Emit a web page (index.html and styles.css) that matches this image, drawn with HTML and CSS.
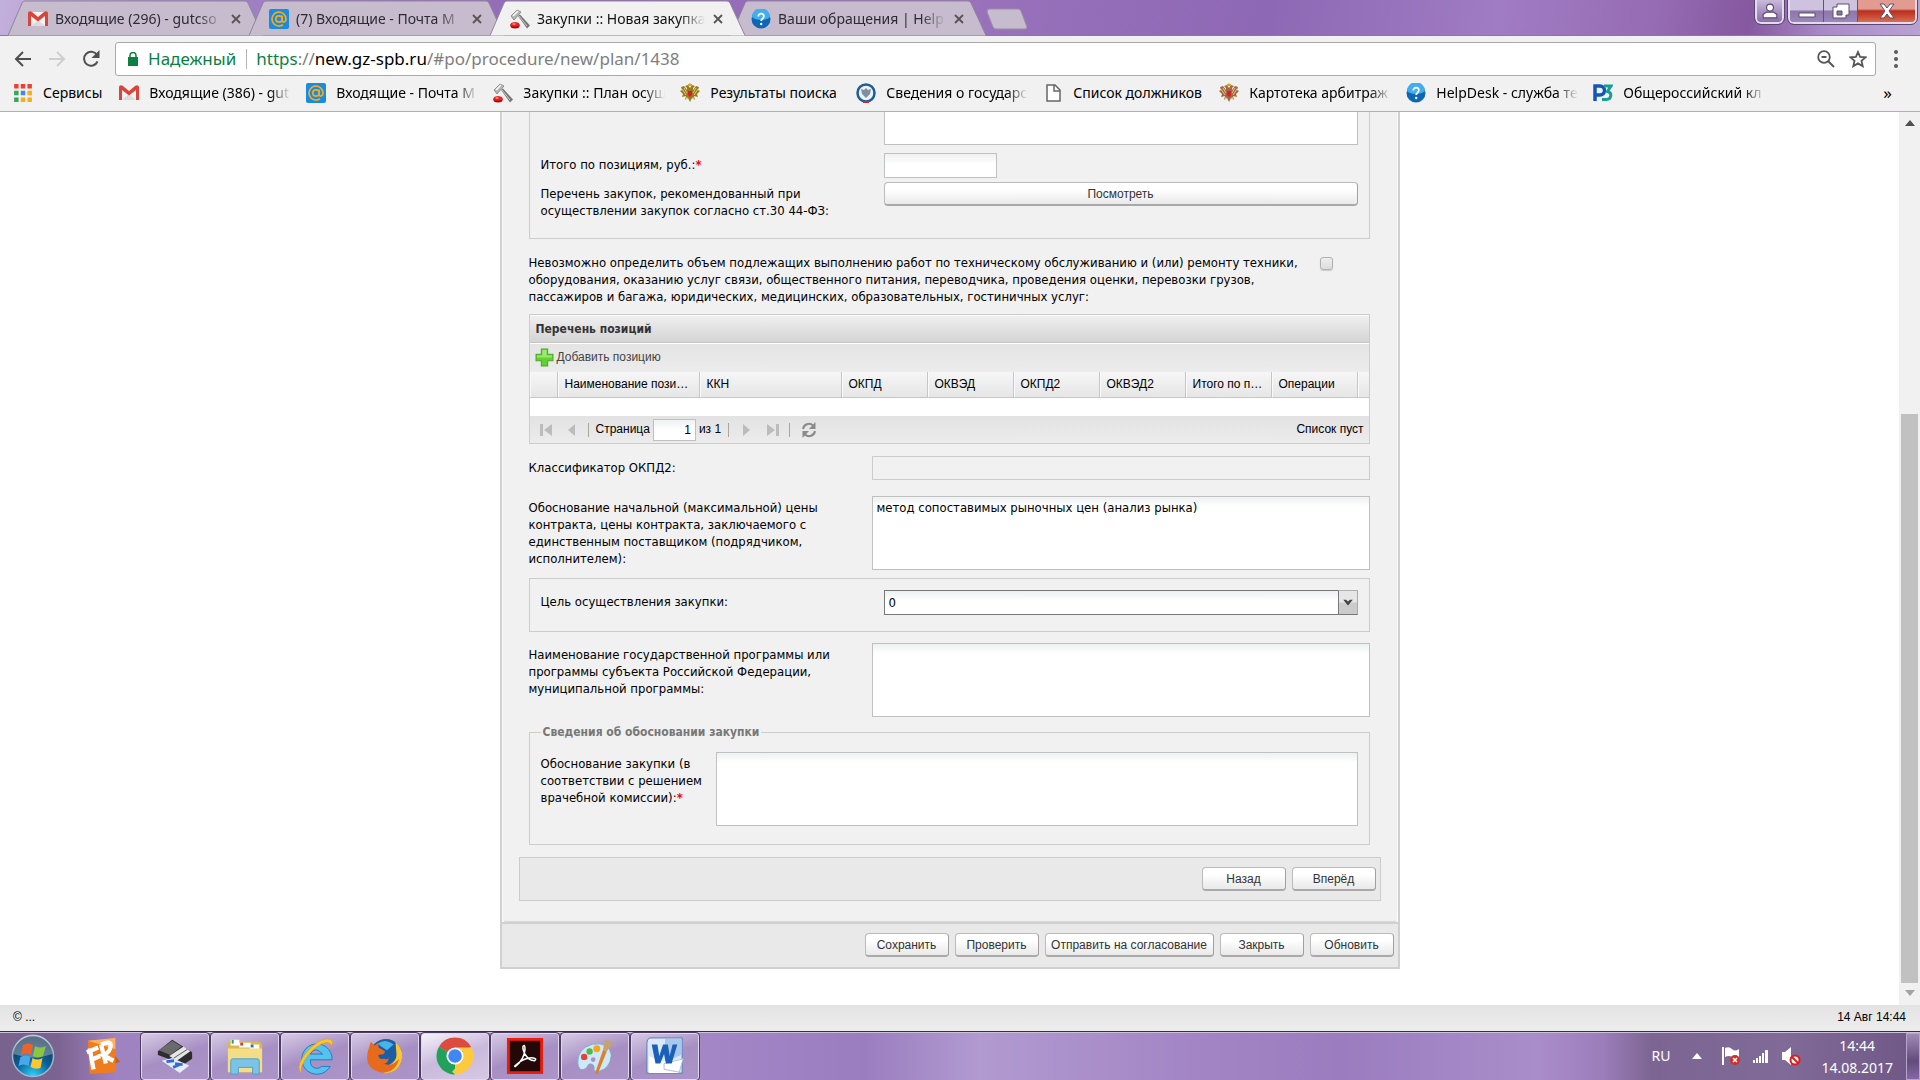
FILE: index.html
```html
<!DOCTYPE html>
<html lang="ru">
<head>
    <meta charset="UTF-8">
    <meta name="viewport" content="width=device-width, initial-scale=1.0">
    <title>Закупки :: Новая закупка</title>
    <link rel="stylesheet" href="styles.css">
</head>
<body>
    <!-- shared icons -->
    <svg class="sprite" aria-hidden="true">
        <symbol id="i-gmail" viewBox="0 0 20 20">
            <path d="M1 3h18v14H1z" fill="#f2f2f2"/>
            <path d="M3 17 10 11l7 6z" fill="#dcdcdc"/>
            <path d="M0 4.500C0 2 2.500 1.500 4 3l6 5 6-5c1.500-1.500 4-1 4 1.500V17h-3V7l-7 5.500L3 7v10H0z" fill="#d9453a"/>
        </symbol>
        <symbol id="i-mail" viewBox="0 0 20 20">
            <rect width="20" height="20" rx="2" fill="#168de2"/>
            <g fill="none" stroke="#f7a81b" stroke-width="1.700">
                <circle cx="10" cy="10" r="3.200"/>
                <path d="M13.200 6.500v5c0 2.500 3.800 2 3.800-1.500a7 7 0 1 0-3 5.800"/>
            </g>
        </symbol>
        <symbol id="i-gavel" viewBox="0 0 20 20">
            <path d="M8 7l2-1.500 10 11-3 3z" fill="#777"/>
            <path d="M9 7l8 10" stroke="#ccc" stroke-width="1"/>
            <path d="M1 7 7 1l4 2-7 8z" fill="#b5b5b5" stroke="#808080" stroke-width=".8"/>
            <path d="M3 7l5-5" stroke="#fff" stroke-width="1.500"/>
            <ellipse cx="5" cy="16.500" rx="4.700" ry="3" fill="#b30000"/>
            <ellipse cx="5" cy="15.500" rx="4.300" ry="2.200" fill="#ee2020"/>
            <ellipse cx="4" cy="15" rx="1.800" ry=".8" fill="#ff9a9a"/>
        </symbol>
        <symbol id="i-help" viewBox="0 0 20 20">
            <circle cx="10" cy="10" r="9.500" fill="#0e67b4"/>
            <path d="M1 8a9 9 0 0 1 18 0c-4 4-14 4-18 0z" fill="#41aef0"/>
            <path d="M7.300 7.500c0-4 6-3.500 5.500 0-.2 2-2.600 2.200-2.600 4.500" fill="none" stroke="#fff" stroke-width="1.800"/>
            <circle cx="10.200" cy="15" r="1.200" fill="#fff"/>
        </symbol>
        <symbol id="i-eagle" viewBox="0 0 20 20">
            <path d="M10 5 8 2 5 3l2 2v2L4 3 1 4l1 3-2 1 3 3-1 3 4-1-1 4 3-2 2 4 2-4 3 2-1-4 4 1-1-3 3-3-2-1 1-3-3-1-3 4V5l2-2-3-1z" fill="currentColor"/>
            <path d="M8 1h1l1-1 1 1h1v2H8z" fill="#d9a521"/>
            <path d="M8 8h4v4l-2 2-2-2z" fill="#d2202c"/>
            <path d="M2 6l4 6M4 5l3 5M18 6l-4 6M16 5l-3 5M7 14l-1 3M13 14l1 3" stroke="#efdc9a" stroke-width=".8"/>
        </symbol>
    </svg>

    <header class="browser">
        <div class="tabstrip">
            <div class="tab">
                <svg class="tab-shape" viewBox="0 0 256 36" preserveAspectRatio="none"><path d="M0 35.500 14 3q1-2 3-2h220q2 0 3 2l15 32.500"/></svg>
                <svg class="tab-icon"><use href="#i-gmail"/></svg>
                <span class="tab-title">Входящие (296) - gutcso</span>
                <button class="tab-close" aria-label="Закрыть вкладку"><svg viewBox="0 0 10 10"><path d="M1 1l8 8M9 1 1 9"/></svg></button>
            </div>
            <div class="tab">
                <svg class="tab-shape" viewBox="0 0 256 36" preserveAspectRatio="none"><path d="M0 35.500 14 3q1-2 3-2h220q2 0 3 2l15 32.500"/></svg>
                <svg class="tab-icon"><use href="#i-mail"/></svg>
                <span class="tab-title">(7) Входящие - Почта М</span>
                <button class="tab-close" aria-label="Закрыть вкладку"><svg viewBox="0 0 10 10"><path d="M1 1l8 8M9 1 1 9"/></svg></button>
            </div>
            <div class="tab tab-active">
                <svg class="tab-shape" viewBox="0 0 256 36" preserveAspectRatio="none"><path d="M0 35.500 14 3q1-2 3-2h220q2 0 3 2l15 32.500"/></svg>
                <svg class="tab-icon"><use href="#i-gavel"/></svg>
                <span class="tab-title">Закупки :: Новая закупка</span>
                <button class="tab-close" aria-label="Закрыть вкладку"><svg viewBox="0 0 10 10"><path d="M1 1l8 8M9 1 1 9"/></svg></button>
            </div>
            <div class="tab">
                <svg class="tab-shape" viewBox="0 0 256 36" preserveAspectRatio="none"><path d="M0 35.500 14 3q1-2 3-2h220q2 0 3 2l15 32.500"/></svg>
                <svg class="tab-icon"><use href="#i-help"/></svg>
                <span class="tab-title">Ваши обращения | Help</span>
                <button class="tab-close" aria-label="Закрыть вкладку"><svg viewBox="0 0 10 10"><path d="M1 1l8 8M9 1 1 9"/></svg></button>
            </div>
            <button class="new-tab" aria-label="Новая вкладка"><svg viewBox="0 0 42 22"><path d="M3 1h29q2 0 3 2l6 16q0 2-2 2H10q-2 0-3-2L1 4q0-3 2-3z"/></svg></button>
            <div class="win-controls">
                <button class="win-user" aria-label="Профиль"><svg viewBox="0 0 14 14"><circle cx="7" cy="4" r="3"/><path d="M1 13v-3l3-2h6l3 2v3z"/></svg></button>
                <div class="win-group">
                    <button class="win-min" aria-label="Свернуть"><svg viewBox="0 0 18 16"><path d="M1 10h16v4H1z"/></svg></button>
                    <button class="win-max" aria-label="Развернуть"><svg viewBox="0 0 18 16"><path d="M5 1h12v11h-3v3H1V4h4z"/><path class="hole" d="M5 8h5v4H5z"/></svg></button>
                    <button class="win-close" aria-label="Закрыть"><svg viewBox="0 0 18 16"><path d="M2 1h4l3 4 3-4h4l-5 7 5 7h-4l-3-4-3 4H2l5-7z"/></svg></button>
                </div>
            </div>
        </div>

        <div class="toolbar">
            <button class="nav-btn" aria-label="Назад"><svg viewBox="0 0 18 18"><path d="M17 9H2M9 2 2 9l7 7"/></svg></button>
            <button class="nav-btn nav-off" aria-label="Вперёд" disabled><svg viewBox="0 0 18 18"><path d="M1 9h15M9 2l7 7-7 7"/></svg></button>
            <button class="nav-btn" aria-label="Обновить страницу"><svg viewBox="0 0 18 18"><path d="M15.500 11.500A7 7 0 1 1 15 5"/><path class="solid" d="M17.500 0v8h-8z"/></svg></button>
            <div class="omnibox">
                <svg class="lock" viewBox="0 0 10 14"><path d="M0 5h10v9H0z"/><path d="M2 6V3.500a3 3 0 0 1 6 0V6" class="shackle"/></svg>
                <span class="secure">Надежный</span>
                <span class="url"><span class="scheme">https</span>://<span class="host">new.gz-spb.ru</span>/#po/procedure/new/plan/1438</span>
                <button class="omni-btn" aria-label="Масштаб"><svg viewBox="0 0 18 18"><circle cx="7" cy="7" r="5.800"/><path d="M11 11l6 6M4.500 7h5"/></svg></button>
                <button class="omni-btn" aria-label="Добавить в закладки"><svg viewBox="0 0 18 18"><path d="M9 2l2.100 4.800 5.400.5-4 3.600 1.200 5.300L9 13.400l-4.700 2.800 1.200-5.300-4-3.600 5.400-.5z"/></svg></button>
            </div>
            <button class="menu-btn" aria-label="Меню"><svg viewBox="0 0 4 18"><circle cx="2" cy="2" r="2"/><circle cx="2" cy="9" r="2"/><circle cx="2" cy="16" r="2"/></svg></button>
        </div>

        <nav class="bookmarks">
            <a href="#" class="apps">
                <svg viewBox="0 0 18 18"><path fill="#ea4335" d="M1 1h4v4H1zM7 1h4v4H7zM13 1h4v4h-4z"/><path fill="#34a853" d="M1 7h4v4H1zM1 13h4v4H1z"/><path fill="#4285f4" d="M7 7h4v4H7z"/><path fill="#fbab18" d="M13 7h4v4h-4zM7 13h4v4H7zM13 13h4v4h-4z"/></svg>
                <span>Сервисы</span>
            </a>
            <a href="#"><svg><use href="#i-gmail"/></svg><span class="cut">Входящие (386) - gut</span></a>
            <a href="#"><svg><use href="#i-mail"/></svg><span class="cut">Входящие - Почта М</span></a>
            <a href="#"><svg><use href="#i-gavel"/></svg><span class="cut">Закупки :: План осущ</span></a>
            <a href="#"><svg class="eagle-gold"><use href="#i-eagle"/></svg><span class="full">Результаты поиска</span></a>
            <a href="#">
                <svg viewBox="0 0 20 20"><circle cx="10" cy="10" r="8.500" fill="#eef2f6" stroke="#1d5c9a" stroke-width="2.500"/><path d="M5 6l3 1 2-2 2 2 3-1-1 5-4 4-4-4z" fill="#7d8fa0"/><path d="M7 19h6" stroke="#cc2b2b" stroke-width="2"/></svg>
                <span class="cut">Сведения о государс</span>
            </a>
            <a href="#">
                <svg viewBox="0 0 20 20"><path d="M4 2h8l5 5v11H4z" fill="#fff" stroke="#666" stroke-width="1.500"/><path d="M11 2v6h6" fill="none" stroke="#666" stroke-width="1.500"/></svg>
                <span class="full">Список должников</span>
            </a>
            <a href="#"><svg class="eagle-brown"><use href="#i-eagle"/></svg><span class="cut">Картотека арбитраж</span></a>
            <a href="#"><svg><use href="#i-help"/></svg><span class="cut">HelpDesk - служба те</span></a>
            <a href="#">
                <svg viewBox="0 0 20 20"><path d="M2 18V3h5a4 4 0 0 1 0 9H3" fill="none" stroke="#1257b8" stroke-width="3.500"/><path d="M11 3h7l-3.500 5.500c5 1 4 8-1 8H9" fill="none" stroke="#14a092" stroke-width="3"/></svg>
                <span class="cut">Общероссийский кл</span>
            </a>
            <button class="more" aria-label="Другие закладки">»</button>
        </nav>
    </header>

    <div class="viewport">
        <main class="content">
            <form class="panel">
                <div class="panel-body">
                    <fieldset class="group group-top">
                        <div class="row">
                            <label class="row-label" for="note"></label>
                            <textarea id="note" class="field field-cut"></textarea>
                        </div>
                        <div class="row">
                            <label class="row-label" for="total">Итого по позициям, руб.:<b class="req">*</b></label>
                            <input id="total" type="text" class="field field-short">
                        </div>
                        <div class="row row-tight">
                            <label class="row-label" for="view">Перечень закупок, рекомендованный при осуществлении закупок согласно ст.30 44-ФЗ:</label>
                            <button id="view" type="button" class="btn btn-wide">Посмотреть</button>
                        </div>
                    </fieldset>

                    <div class="row check-row">
                        <label class="row-label label-wide" for="undef">Невозможно определить объем подлежащих выполнению работ по техническому обслуживанию и (или) ремонту техники, оборудования, оказанию услуг связи, общественного питания, переводчика, проведения оценки, перевозки грузов, пассажиров и багажа, юридических, медицинских, образовательных, гостиничных услуг:</label>
                        <input id="undef" type="checkbox" class="check">
                    </div>

                    <section class="grid">
                        <h2 class="grid-title">Перечень позиций</h2>
                        <div class="grid-tools">
                            <button type="button" class="add-btn">
                                <svg viewBox="0 0 18 18"><path d="M6 1h6v5h5v6h-5v5H6v-5H1V6h5z" fill="#63cf35" stroke="#48ab22"/><path d="M7 2h4v5h5v2H2V7h5z" fill="#9be872"/></svg>
                                Добавить позицию
                            </button>
                        </div>
                        <table class="grid-table">
                            <colgroup><col class="c-num"><col class="c-name"><col class="c-name"><col class="c-code"><col class="c-code"><col class="c-code"><col class="c-code"><col class="c-code"><col class="c-code"><col></colgroup>
                            <thead>
                                <tr><th></th><th>Наименование позиции</th><th>ККН</th><th>ОКПД</th><th>ОКВЭД</th><th>ОКПД2</th><th>ОКВЭД2</th><th>Итого по позиции</th><th>Операции</th><th></th></tr>
                            </thead>
                        </table>
                        <div class="grid-empty"></div>
                        <div class="pager">
                            <button type="button" aria-label="Первая"><svg viewBox="0 0 14 14"><path d="M1 1h3v12H1zM13 1v12L5 7z"/></svg></button>
                            <button type="button" aria-label="Предыдущая"><svg viewBox="0 0 14 14"><path d="M10 1v12L3 7z"/></svg></button>
                            <i class="sep"></i>
                            <label for="page">Страница</label>
                            <input id="page" type="text" value="1">
                            <span>из 1</span>
                            <i class="sep"></i>
                            <button type="button" aria-label="Следующая"><svg viewBox="0 0 14 14"><path d="M3 1v12l7-6z"/></svg></button>
                            <button type="button" aria-label="Последняя"><svg viewBox="0 0 14 14"><path d="M1 1v12l8-6zM10 1h3v12h-3z"/></svg></button>
                            <i class="sep"></i>
                            <button type="button" aria-label="Обновить список"><svg class="reload" viewBox="0 0 16 16"><path d="M2 7a6 6 0 0 1 10-3.500M14 9a6 6 0 0 1-10 3.500"/><path class="tip" d="M14.500 0v7H8zM1.500 16V9H8z"/></svg></button>
                            <span class="pager-info">Список пуст</span>
                        </div>
                    </section>

                    <div class="row">
                        <label class="row-label" for="okpd">Классификатор ОКПД2:</label>
                        <input id="okpd" type="text" class="field field-readonly" readonly>
                    </div>
                    <div class="row row-just">
                        <label class="row-label" for="just">Обоснование начальной (максимальной) цены контракта, цены контракта, заключаемого с единственным поставщиком (подрядчиком, исполнителем):</label>
                        <textarea id="just" class="field field-area">метод сопоставимых рыночных цен (анализ рынка)</textarea>
                    </div>
                    <fieldset class="group group-goal">
                        <div class="row">
                            <label class="row-label" for="goal">Цель осуществления закупки:</label>
                            <div class="combo">
                                <select id="goal"><option>0</option></select>
                                <svg viewBox="0 0 18 24"><path d="M4 9h3l2 2 2-2h3l-5 6z"/></svg>
                            </div>
                        </div>
                    </fieldset>
                    <div class="row">
                        <label class="row-label" for="prog">Наименование государственной программы или программы субъекта Российской Федерации, муниципальной программы:</label>
                        <textarea id="prog" class="field field-area"></textarea>
                    </div>
                    <fieldset class="group group-reason">
                        <legend>Сведения об обосновании закупки</legend>
                        <div class="row">
                            <label class="row-label label-narrow" for="reason">Обоснование закупки (в соответствии с решением врачебной комиссии):<b class="req">*</b></label>
                            <textarea id="reason" class="field field-area"></textarea>
                        </div>
                    </fieldset>

                    <div class="steps">
                        <button type="button" class="btn">Назад</button>
                        <button type="button" class="btn">Вперёд</button>
                    </div>
                </div>
                <div class="panel-footer">
                    <button type="button" class="btn">Сохранить</button>
                    <button type="button" class="btn">Проверить</button>
                    <button type="button" class="btn btn-long">Отправить на согласование</button>
                    <button type="button" class="btn">Закрыть</button>
                    <button type="button" class="btn">Обновить</button>
                </div>
            </form>
        </main>
        <div class="scrollbar">
            <svg viewBox="0 0 10 6"><path d="M0 6 5 0l5 6z" fill="#505050"/></svg>
            <div class="track"><div class="thumb"></div></div>
            <svg viewBox="0 0 10 6"><path d="M0 0l5 6 5-6z" fill="#a3a3a3"/></svg>
        </div>
    </div>

    <footer class="statusbar">
        <span>© ...</span>
        <time>14 Авг 14:44</time>
    </footer>

    <div class="taskbar">
        <button class="start" aria-label="Пуск">
            <svg viewBox="0 0 44 44">
                <defs><radialGradient id="orb" cx=".5" cy="1" r=".9"><stop offset="0" stop-color="#2fd6ff"/><stop offset=".5" stop-color="#0a5f98"/><stop offset="1" stop-color="#173450"/></radialGradient></defs>
                <circle cx="22" cy="22" r="20.500" fill="url(#orb)" stroke="#9fb6cf" stroke-width="1.500"/>
                <path d="M2.500 20a19.500 19.500 0 0 1 39 0q-19 7-39 0z" fill="#fff" opacity=".3"/>
                <path d="M12 11q5-3 10 0l-2 10q-5-3-10 0z" fill="#f0602b"/>
                <path d="M24 12q5 3 11 0l-3 10q-5 3-10 0z" fill="#8cc63e"/>
                <path d="M9.500 23q5-3 10 0l-2 9q-5-3-10 0z" fill="#49a8e8"/>
                <path d="M21.500 24q5 3 10 0l-2 10q-5 2-10-1z" fill="#fdc72f"/>
            </svg>
        </button>
        <button class="pinned" aria-label="FineReader">
            <svg viewBox="0 0 40 40">
                <path d="M4 4 33 1v36L6 39z" fill="#ef7d1e"/><path d="M4 4 33 1v12z" fill="#ffb061"/><path d="M33 20l5 6-5 2z" fill="#c8601a"/>
                <path d="M3 16l12-5M6 12l4 22M8 24l9-4M18 8l5 20M18 8q11-5 10 2t-8 9l11 6" fill="none" stroke="#fff" stroke-width="4.500"/>
            </svg>
        </button>
        <button class="task" aria-label="Сканер">
            <svg viewBox="0 0 40 40">
                <path d="M2 15 17 3l21 13v7l-9 6L2 19z" fill="#2d2d2f"/><path d="M3 14 17 4l10 6-12 9z" fill="#6a6a6d"/><path d="M14 20l15-10 7 5-14 10z" fill="#e6e6e6"/><path d="M19 22l14-9" stroke="#555"/>
                <path d="M6 25l11-3 18 8-10 8z" fill="#e3eefc"/><path d="M11 26l8-1M20 28l8 1M18 32l7-3" stroke="#3766d8" stroke-width="3"/>
            </svg>
        </button>
        <button class="task" aria-label="Проводник">
            <svg viewBox="0 0 40 40">
                <path d="M2 5l10-3 2 3h22l2 4v28H2z" fill="#dcb94d"/><path d="M5 3h9v6H5zM14 6h12v5H14zM25 8h10v5H25z" fill="#fff"/><path d="M6 3h2v4H6z" fill="#2a9c5a"/><path d="M15 6h3v3h-3z" fill="#d9372c"/><path d="M26 8h3v3h-3z" fill="#2b6fc2"/><path d="M2 12h36v25H2z" fill="#f3de85"/>
                <path d="M5 25q0-2 2-2h26q2 0 2 2v14h-7v-7H13v7H5z" fill="#7cc3e8" stroke="#4f9fce"/>
            </svg>
        </button>
        <button class="task" aria-label="Internet Explorer">
            <svg viewBox="0 0 40 40">
                <path d="M38 24a16 16 0 1 0-2 7h-9q-5 4-10 0-2-2-2-7zM15 18q5-9 13 0z" fill="#55c3f0" stroke="#1b7cc0" fill-rule="evenodd"/>
                <path d="M6 38C-6 30 24-4 37 3q3 2 0 7 0-5-6-4C18 9 2 30 6 38z" fill="#fbc62d" stroke="#d89b12" stroke-width=".6"/>
            </svg>
        </button>
        <button class="task" aria-label="Firefox">
            <svg viewBox="0 0 40 40">
                <circle cx="21" cy="19" r="17" fill="#1b5ea6"/><path d="M12 7q9-6 17 1l-7 6z" fill="#48b4e6"/>
                <path d="M31 5q10 9 6 21-5 13-18 12l6-9q8-4 7-12z" fill="#fbc531"/>
                <path d="M5 5l4 4 4-3v5l7 4-1 3-6 1q0 5 6 4 3 1 5-1-1 6-5 6 8 4 16-5-5 17-21 14Q-2 32 2 15z" fill="#e86a1c"/>
            </svg>
        </button>
        <button class="task task-active" aria-label="Chrome">
            <svg viewBox="0 0 40 40">
                <path d="M20 20 3 10.500a19.500 19.500 0 0 1 34 0z" fill="#dc4b3e"/><path d="M20 20l17-9.500A19.500 19.500 0 0 1 20 39.500z" fill="#fdc93d"/><path d="M20 20v19.500A19.500 19.500 0 0 1 3 10.500z" fill="#22a15a"/>
                <path d="M20 11h17.300l-1 4H22z" fill="#fdc93d"/><path d="M28 24l-8 15.500-3-3z" fill="#fdc93d"/><path d="M3 10.500 12 25l3-7z" fill="#22a15a"/>
                <circle cx="20" cy="20" r="9" fill="#fff"/><circle cx="20" cy="20" r="7.200" fill="#4285f4"/>
            </svg>
        </button>
        <button class="task" aria-label="Adobe Reader">
            <svg viewBox="0 0 40 40">
                <path d="M1 1h38v38H1z" fill="#ee1c0e"/><path d="M4 4h32v32H4z" fill="#230808"/>
                <path d="M10 31q9-7 10-18 0-4-1-4-3 1 1 9 4 7 10 7 3-2-1-3-9-1-18 7-3 2-1 2z" fill="none" stroke="#fff" stroke-width="1.600"/>
            </svg>
        </button>
        <button class="task" aria-label="Paint">
            <svg viewBox="0 0 42 40">
                <path d="M2 28Q1 12 18 7q19-3 21 12-1 15-14 18-6 1-5-4 0-5-6-4-3 7-9 6-3-3-3-7z" fill="#cfe8f6" stroke="#7aa9cc"/>
                <circle cx="9" cy="21" r="3.500" fill="#e2413a"/><circle cx="15" cy="15" r="3.500" fill="#4fb848"/><circle cx="23" cy="12" r="3.800" fill="#f6a51c"/><circle cx="19" cy="24" r="2.500" fill="#a791c4"/>
                <path d="M21 39l9-26 4 2-10 25z" fill="#d9812f"/><path d="M30 13l2-11 9 3-7 10z" fill="#c7a26d"/>
            </svg>
        </button>
        <button class="task" aria-label="Word">
            <svg viewBox="0 0 40 40">
                <path d="M5 1h33v37H1V7q0-6 4-6z" fill="#dbe8f8" stroke="#4d7dbd"/><path d="M20 2h17v17L20 26z" fill="#a9c8ee"/>
                <path d="M3 20l14 6 22-3-5 15H3z" fill="#fff"/><path d="M19 28l20-5-4 14-16-3z" fill="#fff" stroke="#a8bcd8"/>
                <path d="M6 8h6l2 12 4-12h5l2 12 3-12h5l-6 20h-6l-2-10-4 10H10z" fill="#1a5fb8"/>
            </svg>
        </button>
        <div class="tray">
            <span class="lang">RU</span>
            <svg class="tray-up" viewBox="0 0 10 6"><path d="M0 6l5-6 5 6z"/></svg>
            <svg class="tray-icon" viewBox="0 0 20 20"><path d="M1 1h2v18H1zM4 2q4-2 7 1t7 0v8q-4 2-7 0t-7 0z" fill="#fff"/><circle cx="14" cy="14" r="5" fill="#d22f27"/><path d="M12 12l4 4M16 12l-4 4" stroke="#fff" stroke-width="1.500"/></svg>
            <svg class="tray-icon" viewBox="0 0 20 20"><path d="M2 14h2v3H2zM5 12h2v5H5zM8 10h2v7H8zM11 7h2v10h-2zM14 4h3v13h-3z" fill="#fff"/></svg>
            <svg class="tray-icon" viewBox="0 0 20 20"><path d="M1 6h3l6-5v18l-6-5H1z" fill="#fff"/><circle cx="14" cy="14" r="4.500" fill="#fff" stroke="#e01b1b" stroke-width="2"/><path d="M11 11l6 6" stroke="#e01b1b" stroke-width="2"/></svg>
            <div class="clock"><span>14:44</span><span>14.08.2017</span></div>
            <button class="peek" aria-label="Свернуть все окна"></button>
        </div>
    </div>
</body>
</html>
```
FILE: styles.css
```css
* {
    box-sizing: border-box;
}
body {
    margin: 0;
    height: 100vh;
    display: flex;
    flex-direction: column;
    overflow: hidden;
    background: #fff;
    color: #000;
    font-family: "DejaVu Sans Condensed", "DejaVu Sans", sans-serif;
    font-size: 13px;
    line-height: 17px;
}
button, input, textarea, select {
    font: inherit;
    color: inherit;
    margin: 0;
}
button {
    padding: 0;
    border: 0;
    background: none;
}
svg {
    display: block;
}
.sprite {
    display: none;
}

/* browser window */
.browser {
    flex: none;
    font-family: "Noto Sans", sans-serif;
    font-size: 14px;
    line-height: 20px;
    background: #f1f1f1;
    border-bottom: 1px solid #b0b0b0;
}
.tabstrip {
    display: flex;
    height: 36px;
    padding-left: 8px;
    background: linear-gradient(100deg, #c4b0dc 0%, #a387c6 8%, #9068b4 30%, #9a72bc 50%, #8d68b4 66%, #a07cc4 78%, #966cb4 86%, #85589f 91%, #a98ac8 95%, #b9a3d2 100%);
    box-shadow: inset 0 -1px #8a779c;
}
.tab {
    position: relative;
    display: flex;
    align-items: center;
    width: 256px;
    margin-right: -15px;
    padding: 2px 21px 0 20px;
    color: #2e2a33;
}
.tab-shape {
    position: absolute;
    inset: 0;
    width: 100%;
    height: 36px;
    fill: #c6bccd;
    stroke: #8f859b;
}
.tab-active {
    z-index: 1;
    color: #111;
}
.tab-active .tab-shape {
    fill: #f1f1f1;
}
.tab-icon {
    position: relative;
    flex: none;
    width: 20px;
    height: 20px;
}
.tab-title {
    position: relative;
    flex: 1;
    margin: 0 8px 0 7px;
    overflow: hidden;
    white-space: nowrap;
    -webkit-mask-image: linear-gradient(90deg, #000 85%, transparent);
    mask-image: linear-gradient(90deg, #000 85%, transparent);
}
.tab-close {
    position: relative;
    flex: none;
    width: 12px;
}
.tab-close svg {
    width: 10px;
    height: 10px;
    stroke: #555;
    stroke-width: 1.8;
}
.new-tab {
    margin: 8px 0 0 14px;
    align-self: flex-start;
}
.new-tab svg {
    width: 42px;
    height: 22px;
    fill: #c6bccd;
    stroke: #998ea6;
}
.win-controls {
    display: flex;
    gap: 4px;
    margin-left: auto;
    padding-right: 3px;
}
.win-controls svg {
    width: 18px;
    height: 16px;
    margin: 0 auto;
    fill: #fff;
    stroke: #5b4c70;
}
.win-controls .hole {
    fill: #8a78a2;
}
.win-user, .win-group {
    height: 24px;
    border: 2px solid #e3daec;
    border-top: 0;
    border-radius: 0 0 6px 6px;
    outline: 1px solid #5b4671;
    background: linear-gradient(#c9badb, #8b6ca8);
}
.win-user {
    width: 29px;
}
.win-group {
    display: flex;
    overflow: hidden;
}
.win-min, .win-max {
    width: 34px;
    border-right: 1px solid #66517d;
    background: linear-gradient(#cfc2de 0 45%, #8d76a8 50%, #9e86ba);
}
.win-close {
    width: 57px;
    background: linear-gradient(#e29b90 0 40%, #b92e1c 50%, #d96c50);
}

.toolbar {
    display: flex;
    align-items: center;
    gap: 14px;
    height: 43px;
    padding: 3px 18px 0 13px;
}
.nav-btn svg {
    width: 20px;
    height: 18px;
    fill: none;
    stroke: #4f4f4f;
    stroke-width: 2;
}
.nav-btn .solid {
    fill: #4f4f4f;
    stroke: none;
}
.nav-off svg {
    stroke: #cfcfcf;
}
.omnibox {
    flex: 1;
    display: flex;
    align-items: center;
    height: 34px;
    padding: 0 8px 0 12px;
    border: 1px solid #a9a9a9;
    border-radius: 3px;
    background: #fff;
    font-size: 17px;
}
.lock {
    width: 10px;
    height: 14px;
    fill: #0b8043;
}
.lock .shackle {
    fill: none;
    stroke: #0b8043;
    stroke-width: 1.5;
}
.secure {
    margin-left: 10px;
    padding-right: 10px;
    border-right: 1px solid #b5b5b5;
    color: #0b8043;
}
.url {
    flex: 1;
    margin-left: 9px;
    color: #7e7e7e;
}
.scheme {
    color: #0b8043;
}
.host {
    color: #000;
}
.omni-btn {
    margin-left: 14px;
}
.omni-btn svg {
    width: 18px;
    height: 18px;
    fill: none;
    stroke: #555;
    stroke-width: 1.8;
}
.menu-btn svg {
    width: 4px;
    height: 18px;
    margin: 0 4px;
    fill: #5a5a5a;
}

.bookmarks {
    display: flex;
    align-items: center;
    gap: 15px;
    height: 32px;
    padding: 0 28px 4px 13px;
}
.bookmarks a {
    display: flex;
    align-items: center;
    gap: 10px;
    color: #000;
    text-decoration: none;
    white-space: nowrap;
}
.bookmarks svg {
    flex: none;
    width: 20px;
    height: 20px;
}
.bookmarks .apps {
    margin-right: 2px;
}
.bookmarks .cut {
    width: 142px;
    overflow: hidden;
    -webkit-mask-image: linear-gradient(90deg, #000 85%, transparent);
    mask-image: linear-gradient(90deg, #000 85%, transparent);
}
.bookmarks .full {
    min-width: 131px;
}
.eagle-gold {
    color: #9a7b1c;
}
.eagle-brown {
    color: #a5673f;
}
.more {
    margin-left: auto;
    font-size: 17px;
}

/* page */
.viewport {
    flex: 1;
    display: flex;
    min-height: 0;
}
.content {
    flex: 1;
    overflow: hidden;
}
.panel {
    width: 900px;
    margin: 0 auto;
    border: 2px solid #d0d0d0;
    border-top: 0;
}
.panel-body {
    padding: 0 27px 20px 26px;
    border: 1px solid #fafafa;
    border-top: 0;
    border-bottom-color: #d8d8d8;
    border-radius: 0 0 4px 4px;
    background: #f1f1f1;
}
.group {
    min-width: 0;
    margin: 0;
    padding: 11px 11px 16px;
    border: 1px solid #ccc;
}
.group-top {
    padding-top: 0;
    padding-bottom: 32px;
    border-top: 0;
    margin-bottom: 12px;
}
.row {
    display: flex;
    align-items: flex-start;
}
.row-label {
    flex: none;
    width: 343px;
    padding: 3px 24px 0 0;
}
.label-wide {
    width: 791px;
    padding-right: 16px;
}
.label-narrow {
    width: 175px;
    padding-right: 0;
}
.req {
    color: #f00;
}
.group-top .row {
    margin-top: 8px;
}
.group-top .row:first-child {
    margin-top: 0;
}
.group-top .row-tight {
    margin-top: 4px;
    height: 24px;
}
.field {
    flex: 1;
    min-width: 0;
    height: 25px;
    padding: 3px 4px;
    border: 1px solid #c0c0c0;
    border-radius: 0;
    background: linear-gradient(#edf1f1, #fff 10px);
    resize: none;
    outline: 0;
    line-height: 16px;
}
.field-cut {
    height: 33px;
    border-top: 0;
    background: #fff;
}
.field-short {
    flex: none;
    width: 113px;
}
.field-area {
    height: 74px;
}
.field-readonly {
    height: 24px;
    border-color: #ccc;
    background: none;
}
.check-row {
    margin-bottom: 9px;
}
.check {
    appearance: none;
    width: 13px;
    height: 13px;
    margin-top: 6px;
    border: 1px solid #b0b0b0;
    border-radius: 3px;
    background: linear-gradient(#eee, #dcdcdc);
    box-shadow: 0 1px 1px #ccc;
}

.btn {
    width: 84px;
    height: 24px;
    border: 1px solid #bbb;
    border-right-color: #a0a0a0;
    border-bottom: 2px solid #a9a9a9;
    border-radius: 4px;
    background: linear-gradient(#fff 30%, #e9e9e9);
    color: #333;
    font-family: "Liberation Sans", Arial, sans-serif;
    font-size: 12px;
    line-height: 16px;
    white-space: nowrap;
}
.btn-wide {
    flex: 1;
}
.btn-long {
    width: 169px;
}

.grid {
    margin-bottom: 12px;
    border: 1px solid #ccc;
    font-family: "Liberation Sans", Arial, sans-serif;
    font-size: 12px;
}
.grid-title {
    margin: 0;
    padding: 6px 6px 5px;
    border-bottom: 1px solid #c4c4c4;
    background: linear-gradient(#f0f0f0, #d4d4d4);
    box-shadow: inset 0 1px #fafafa;
    color: #333;
    font: bold 12px/16px "DejaVu Sans Condensed", "DejaVu Sans", sans-serif;
}
.grid-tools {
    height: 29px;
    padding: 3px 5px;
    border-top: 1px solid #fff;
    background: linear-gradient(#e4e4e4, #ececec);
}
.add-btn {
    display: flex;
    align-items: center;
    gap: 3px;
    height: 20px;
    color: #444;
}
.add-btn svg {
    width: 19px;
    height: 19px;
}
.grid-table {
    width: 100%;
    table-layout: fixed;
    border-collapse: separate;
    border-spacing: 0;
}
.c-num {
    width: 28px;
}
.c-name {
    width: 142px;
}
.c-code {
    width: 86px;
}
.grid-table th {
    height: 26px;
    padding: 0 7px;
    overflow: hidden;
    border-right: 1px solid #c6c6c6;
    border-bottom: 1px solid #c6c6c6;
    background: linear-gradient(#f6f6f6, #e6e6e6);
    box-shadow: inset 1px 0 #fafafa;
    font-weight: normal;
    text-align: left;
    text-overflow: ellipsis;
    white-space: nowrap;
}
.grid-table th:last-child {
    border-right: 0;
}
.grid-empty {
    height: 18px;
    background: #fff;
}
.pager {
    display: flex;
    align-items: center;
    height: 27px;
    padding: 0 5px;
    background: linear-gradient(#e2e2e2, #ececec);
}
.pager button {
    width: 26px;
}
.pager svg {
    width: 14px;
    height: 14px;
    margin: 0 auto 0 4px;
    fill: #bcbcbc;
}
.pager .sep {
    width: 1px;
    height: 14px;
    margin: 0 7px 0 1px;
    background: #aca899;
}
.pager input {
    width: 43px;
    height: 22px;
    margin: 0 3px;
    padding: 0 4px;
    border: 1px solid #c0c0c0;
    background: linear-gradient(#edf1f1, #fff 10px);
    text-align: right;
}
.pager span + .sep {
    margin-left: 7px;
}
.pager .reload {
    width: 16px;
    height: 16px;
    fill: none;
    stroke: #8a8a8a;
    stroke-width: 2;
}
.pager .tip {
    fill: #8a8a8a;
    stroke: none;
}
.pager-info {
    margin-left: auto;
}

.row-just {
    margin: 16px 0 8px;
}
.group-goal {
    margin-bottom: 11px;
}
.combo {
    position: relative;
    flex: 1;
    height: 25px;
}
.combo select {
    appearance: none;
    width: 100%;
    height: 25px;
    padding: 0 24px 0 4px;
    border: 1px solid #777;
    border-radius: 0;
    background: linear-gradient(#edf1f1, #fff 10px);
}
.combo svg {
    position: absolute;
    top: 0;
    right: 0;
    width: 20px;
    height: 25px;
    border: 1px solid #777;
    border-top-color: #b0b0b0;
    border-right-color: #aaa;
    background: linear-gradient(#e6e6e6 45%, #cbcbcb 55%);
    fill: #444;
    pointer-events: none;
}
.group-reason {
    margin: 7px 0 12px;
    padding: 11px 11px 18px;
}
.group-reason legend {
    padding: 0 2px;
    color: #777;
    font-size: 12px;
    font-weight: bold;
}
.steps {
    display: flex;
    justify-content: flex-end;
    gap: 6px;
    height: 44px;
    margin: 0 -11px 0 -10px;
    padding: 9px 4px;
    border: 1px solid #ccc;
    background: #e9e9e9;
}
.panel-footer {
    display: flex;
    justify-content: flex-end;
    gap: 6px;
    height: 45px;
    padding: 9px 4px;
    border-top: 2px solid #d0d0d0;
    background: #e9e9e9;
}

.scrollbar {
    display: flex;
    flex-direction: column;
    align-items: center;
    width: 21px;
    padding: 8px 0 9px;
    background: #f1f1f1;
}
.scrollbar svg {
    width: 10px;
    height: 6px;
}
.track {
    flex: 1;
    display: flex;
    align-items: flex-end;
    padding: 7px 0;
}
.thumb {
    width: 17px;
    height: 67%;
    background: #c1c1c1;
}

.statusbar {
    flex: none;
    display: flex;
    justify-content: space-between;
    align-items: center;
    height: 26px;
    padding: 0 14px 2px 13px;
    background: linear-gradient(#e3e3e3, #ededed);
    font-family: "Liberation Sans", Arial, sans-serif;
    font-size: 12px;
}

/* taskbar */
.taskbar {
    flex: none;
    display: flex;
    align-items: center;
    gap: 2px;
    height: 49px;
    border-top: 1px solid #3b2c4a;
    background: linear-gradient(90deg, #78628e 0%, #7b6391 3%, #9f82c0 6%, #a487c6 36%, #9a7dbf 45%, #b19ad0 51%, #a385c5 62%, #9b7dbf 70%, #a98dca 80%, #9b7dba 83.500%, #7c6592 86%, #806a98 93%, #6f5785 100%);
    box-shadow: inset 0 1px #cdbfdd;
}
.start {
    margin-left: 11px;
}
.start svg {
    width: 44px;
    height: 44px;
}
.pinned {
    margin: 0 17px 0 27px;
}
.pinned svg, .task svg {
    width: 38px;
    height: 38px;
    margin: 0 auto;
}
.task {
    width: 68px;
    height: 47px;
    border: 1px solid #e2d8ec;
    border-radius: 3px;
    outline: 1px solid #4f3c63;
    background: linear-gradient(160deg, #d6cae4, #a78fc4 50%, #ab94c8);
}
.task-active {
    background: linear-gradient(160deg, #f6f2fa, #c9b9dc 50%, #d6c9e4);
}
.tray {
    display: flex;
    align-items: center;
    margin-left: auto;
    color: #fff;
    font: 14px/22px "Noto Sans", sans-serif;
}
.tray-up {
    width: 10px;
    height: 6px;
    margin: 0 19px 0 22px;
    fill: #fff;
}
.tray-icon {
    width: 20px;
    height: 20px;
    margin-right: 10px;
}
.clock {
    display: flex;
    flex-direction: column;
    align-items: center;
    margin: 2px 13px 0 10px;
}
.peek {
    width: 14px;
    height: 47px;
    border: 1px solid #b5a5c6;
    background: linear-gradient(#a08bb5, #634b7b 60%, #8568a5);
}
```
